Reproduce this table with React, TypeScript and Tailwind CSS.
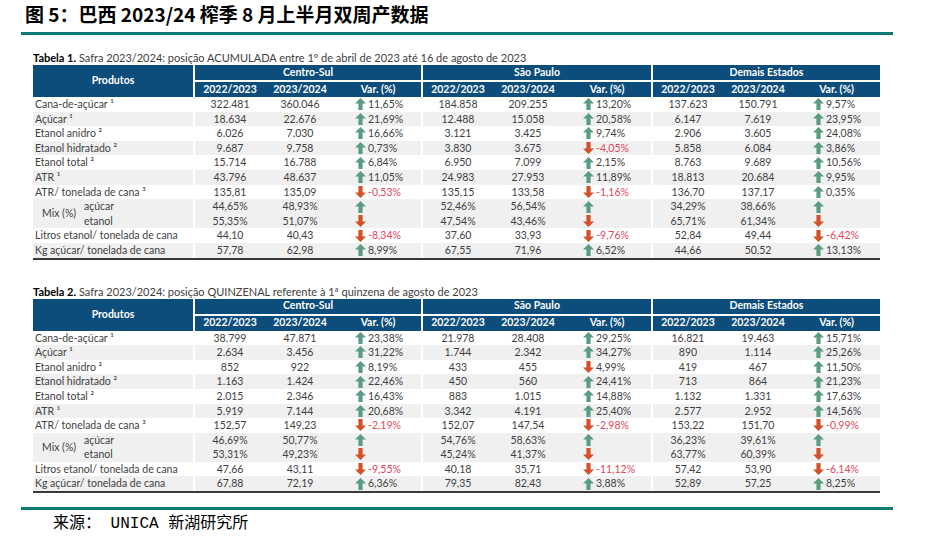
import React from 'react';

type Dir = 'u' | 'd';
type Grp = [string, string, Dir, string];
type Row = { label: string; g: Grp[] };
type MixGrp = [string, string, string, string];

interface TableData {
  rows: Row[];
  mix: MixGrp[];
  tail: Row[];
}

const groupW = ['w-[226px]', 'w-[228px]', 'w-[227px]'];
const groupNames = ['Centro-Sul', 'São Paulo', 'Demais Estados'];

const t1: TableData = {
  rows: [
    { label: 'Cana-de-açúcar ¹', g: [['322.481', '360.046', 'u', '11,65%'], ['184.858', '209.255', 'u', '13,20%'], ['137.623', '150.791', 'u', '9,57%']] },
    { label: 'Açúcar ¹', g: [['18.634', '22.676', 'u', '21,69%'], ['12.488', '15.058', 'u', '20,58%'], ['6.147', '7.619', 'u', '23,95%']] },
    { label: 'Etanol anidro ²', g: [['6.026', '7.030', 'u', '16,66%'], ['3.121', '3.425', 'u', '9,74%'], ['2.906', '3.605', 'u', '24,08%']] },
    { label: 'Etanol hidratado ²', g: [['9.687', '9.758', 'u', '0,73%'], ['3.830', '3.675', 'd', '-4,05%'], ['5.858', '6.084', 'u', '3,86%']] },
    { label: 'Etanol total ²', g: [['15.714', '16.788', 'u', '6,84%'], ['6.950', '7.099', 'u', '2,15%'], ['8.763', '9.689', 'u', '10,56%']] },
    { label: 'ATR ¹', g: [['43.796', '48.637', 'u', '11,05%'], ['24.983', '27.953', 'u', '11,89%'], ['18.813', '20.684', 'u', '9,95%']] },
    { label: 'ATR/ tonelada de cana ³', g: [['135,81', '135,09', 'd', '-0,53%'], ['135,15', '133,58', 'd', '-1,16%'], ['136,70', '137,17', 'u', '0,35%']] },
  ],
  mix: [
    ['44,65%', '48,93%', '55,35%', '51,07%'],
    ['52,46%', '56,54%', '47,54%', '43,46%'],
    ['34,29%', '38,66%', '65,71%', '61,34%'],
  ],
  tail: [
    { label: 'Litros etanol/ tonelada de cana', g: [['44,10', '40,43', 'd', '-8,34%'], ['37,60', '33,93', 'd', '-9,76%'], ['52,84', '49,44', 'd', '-6,42%']] },
    { label: 'Kg açúcar/ tonelada de cana', g: [['57,78', '62,98', 'u', '8,99%'], ['67,55', '71,96', 'u', '6,52%'], ['44,66', '50,52', 'u', '13,13%']] },
  ],
};

const t2: TableData = {
  rows: [
    { label: 'Cana-de-açúcar ¹', g: [['38.799', '47.871', 'u', '23,38%'], ['21.978', '28.408', 'u', '29,25%'], ['16.821', '19.463', 'u', '15,71%']] },
    { label: 'Açúcar ¹', g: [['2.634', '3.456', 'u', '31,22%'], ['1.744', '2.342', 'u', '34,27%'], ['890', '1.114', 'u', '25,26%']] },
    { label: 'Etanol anidro ²', g: [['852', '922', 'u', '8,19%'], ['433', '455', 'd', '4,99%'], ['419', '467', 'u', '11,50%']] },
    { label: 'Etanol hidratado ²', g: [['1.163', '1.424', 'u', '22,46%'], ['450', '560', 'u', '24,41%'], ['713', '864', 'u', '21,23%']] },
    { label: 'Etanol total ²', g: [['2.015', '2.346', 'u', '16,43%'], ['883', '1.015', 'u', '14,88%'], ['1.132', '1.331', 'u', '17,63%']] },
    { label: 'ATR ¹', g: [['5.919', '7.144', 'u', '20,68%'], ['3.342', '4.191', 'u', '25,40%'], ['2.577', '2.952', 'u', '14,56%']] },
    { label: 'ATR/ tonelada de cana ³', g: [['152,57', '149,23', 'd', '-2,19%'], ['152,07', '147,54', 'd', '-2,98%'], ['153,22', '151,70', 'd', '-0,99%']] },
  ],
  mix: [
    ['46,69%', '50,77%', '53,31%', '49,23%'],
    ['54,76%', '58,63%', '45,24%', '41,37%'],
    ['36,23%', '39,61%', '63,77%', '60,39%'],
  ],
  tail: [
    { label: 'Litros etanol/ tonelada de cana', g: [['47,66', '43,11', 'd', '-9,55%'], ['40,18', '35,71', 'd', '-11,12%'], ['57,42', '53,90', 'd', '-6,14%']] },
    { label: 'Kg açúcar/ tonelada de cana', g: [['67,88', '72,19', 'u', '6,36%'], ['79,35', '82,43', 'u', '3,88%'], ['52,89', '57,25', 'u', '8,25%']] },
  ],
};

function Arrow({ dir }: { dir: Dir }) {
  if (dir === 'u') {
    return (
      <svg width="11" height="12" viewBox="0 0 11 12" className="shrink-0">
        <path d="M5.5 0 L11 5.6 L7.6 5.6 L7.6 12 L3.4 12 L3.4 5.6 L0 5.6 Z" fill="#5a9c80" />
      </svg>
    );
  }
  return (
    <svg width="11" height="12" viewBox="0 0 11 12" className="shrink-0">
      <path d="M5.5 12 L11 6.4 L7.6 6.4 L7.6 0 L3.4 0 L3.4 6.4 L0 6.4 Z" fill="#d4502b" />
    </svg>
  );
}

function DataRow({ row, gray }: { row: Row; gray: boolean }) {
  const bg = gray ? 'bg-[#f0f0f0]' : 'bg-white';
  return (
    <div className="flex h-[14.6px] gap-[2px] leading-[14.6px]">
      <div className={`w-[160px] pl-[2px] ${bg}`}>{row.label}</div>
      {row.g.map((g, i) => (
        <div key={i} className={`flex ${groupW[i]} ${bg}`}>
          <div className="w-[70px] text-center">{g[0]}</div>
          <div className="w-[70px] text-center">{g[1]}</div>
          <div className="flex flex-1 items-center gap-[2px] pl-[20px]">
            <Arrow dir={g[2]} />
            <span className={g[3].startsWith('-') ? 'text-[#e2475a]' : ''}>{g[3]}</span>
          </div>
        </div>
      ))}
    </div>
  );
}

function MixRow({ mix }: { mix: MixGrp[] }) {
  return (
    <div className="flex h-[29.2px] gap-[2px] leading-[14.6px]">
      <div className="flex w-[160px] items-center bg-[#f0f0f0] pl-[9px]">
        <span className="w-[42px]">Mix (%)</span>
        <div className="flex flex-col">
          <span>açúcar</span>
          <span>etanol</span>
        </div>
      </div>
      {mix.map((m, i) => (
        <div key={i} className={`flex ${groupW[i]} bg-[#f0f0f0]`}>
          <div className="flex w-[70px] flex-col text-center">
            <span>{m[0]}</span>
            <span>{m[2]}</span>
          </div>
          <div className="flex w-[70px] flex-col text-center">
            <span>{m[1]}</span>
            <span>{m[3]}</span>
          </div>
          <div className="flex flex-1 flex-col justify-around py-[1px] pl-[20px]">
            <Arrow dir="u" />
            <Arrow dir="d" />
          </div>
        </div>
      ))}
    </div>
  );
}

function DataTable({ data }: { data: TableData }) {
  return (
    <div className="ml-[33px] w-[847px] font-['Lato',sans-serif] text-[10.5px] text-[#3f3f3f]">
      {/* header */}
      <div className="flex h-[32px] gap-[2px] font-bold text-white">
        <div className="flex w-[160px] items-center justify-center bg-[#0d4d7c]">Produtos</div>
        {groupNames.map((name, i) => (
          <div key={name} className={`flex ${groupW[i]} flex-col gap-[2px]`}>
            <div className="flex h-[15px] items-center justify-center bg-[#0d4d7c]">{name}</div>
            <div className="flex h-[15px] items-center bg-[#0d4d7c]">
              <div className="w-[70px] text-center">2022/2023</div>
              <div className="w-[70px] text-center">2023/2024</div>
              <div className="flex-1 text-center">Var. (%)</div>
            </div>
          </div>
        ))}
      </div>
      {data.rows.map((r, i) => (
        <DataRow key={r.label} row={r} gray={i % 2 === 1} />
      ))}
      <MixRow mix={data.mix} />
      <DataRow row={data.tail[0]} gray={false} />
      <DataRow row={data.tail[1]} gray={true} />
      <div className="h-[2px] bg-[#3a3a3a]" />
    </div>
  );
}

function Caption({ n, text }: { n: number; text: string }) {
  return (
    <div className="ml-[33px] h-[14px] font-['Lato',sans-serif] text-[11px] leading-[14px] text-[#404040]">
      <span className="font-bold text-black">Tabela {n}.</span> {text}
    </div>
  );
}

export default function App() {
  return (
    <div className="h-[539px] w-[925px] overflow-hidden bg-white">
      <div className="h-[32px] pl-[25px] pt-[4px] font-['Noto_Sans_CJK_SC',sans-serif] text-[19px] font-bold leading-[20px] text-black">
        图 5：巴西 2023/24 榨季 8 月上半月双周产数据
      </div>
      <div className="ml-[21px] h-[3px] w-[872px] bg-[#0b7b73]" />
      <div className="h-[16px]" />
      <Caption n={1} text="Safra 2023/2024: posição ACUMULADA entre 1º de abril de 2023 até 16 de agosto de 2023" />
      <DataTable data={t1} />
      <div className="h-[25px]" />
      <Caption n={2} text="Safra 2023/2024: posição QUINZENAL referente à 1ª quinzena de agosto de 2023" />
      <DataTable data={t2} />
      <div className="h-[14px]" />
      <div className="ml-[21px] h-[3px] w-[872px] bg-[#0b7b73]" />
      <div className="pl-[53px] pt-[5px] font-['Liberation_Mono','Noto_Sans_CJK_SC',monospace] text-[16px] leading-[18px] text-black">
        来源： UNICA 新湖研究所
      </div>
    </div>
  );
}
